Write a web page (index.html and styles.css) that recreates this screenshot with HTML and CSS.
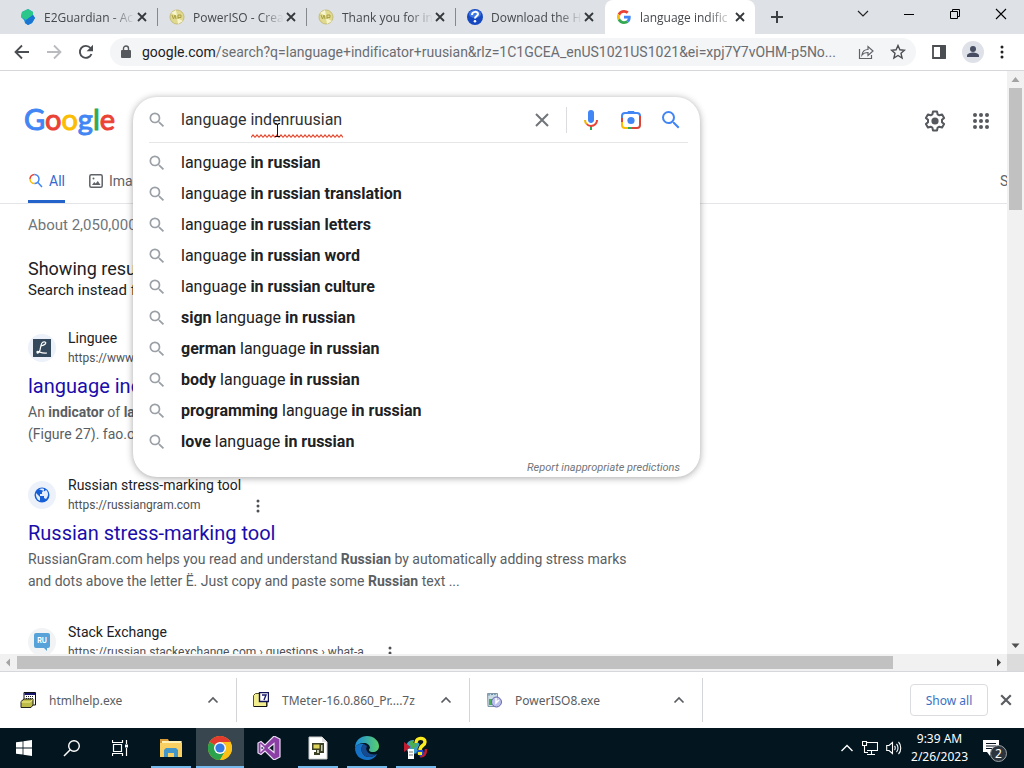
FILE: index.html
```html
<!DOCTYPE html>
<html lang="en">
<head>
<meta charset="utf-8">
<title>language indificator ruusian - Google Search</title>
<link rel="stylesheet" href="styles.css">
</head>
<body>
<svg class="defs" aria-hidden="true">
  <symbol id="x" viewBox="0 0 10 10"><path d="M1 1l8 8M9 1l-8 8" fill="none" stroke="currentColor" stroke-width="1.8"/></symbol>
  <symbol id="mag" viewBox="0 0 24 24"><path fill="currentColor" d="M15.5 14h-.79l-.28-.27A6.47 6.47 0 0 0 16 9.5 6.5 6.5 0 1 0 9.5 16c1.61 0 3.09-.59 4.23-1.57l.27.28v.79l5 4.99L20.49 19l-4.99-5zm-6 0C7.01 14 5 11.99 5 9.5S7.01 5 9.5 5 14 7.01 14 9.5 11.99 14 9.5 14z"/></symbol>
  <symbol id="dots" viewBox="0 0 4 14"><g fill="currentColor"><circle cx="2" cy="2" r="1.5"/><circle cx="2" cy="7" r="1.5"/><circle cx="2" cy="12" r="1.5"/></g></symbol>
  <symbol id="up" viewBox="0 0 12 8"><path d="M1.500 6.500L6 2l4.500 4.500" fill="none" stroke="currentColor" stroke-width="1.700"/></symbol>
  <symbol id="disc" viewBox="0 0 16 16"><circle cx="8" cy="8" r="7" fill="#e0d98e" stroke="#c6bd77"/><path d="M2 4l5-3 1 6M14 12l-5 3-1-6" fill="#f7f5ce"/><path d="M3 6l1.500 4L6 6l1 4M9 10V6h3v2.500H9" fill="none" stroke="#aaa045"/></symbol>
</svg>

<header class="tabs">
  <div class="tab"><svg class="fav" viewBox="0 0 16 16"><path d="M8 0l5 3v3l2 3-3 5-4 2-3-2-1-3-3-3 1-5z" fill="#168fd8"/><path d="M8 0l5 3v3L6 11l-5-3 1-5z" fill="#2bc78a"/><path d="M6 11l7-5 2 3-3 5-4 2-3-2z" fill="#1976d2"/></svg><span class="title">E2Guardian - Ac</span><button class="close" aria-label="Close tab"><svg><use href="#x"/></svg></button></div>
  <div class="tab"><svg class="fav"><use href="#disc"/></svg><span class="title">PowerISO - Crea</span><button class="close" aria-label="Close tab"><svg><use href="#x"/></svg></button></div>
  <div class="tab"><svg class="fav"><use href="#disc"/></svg><span class="title">Thank you for in</span><button class="close" aria-label="Close tab"><svg><use href="#x"/></svg></button></div>
  <div class="tab last"><svg class="fav" viewBox="0 0 16 16"><circle cx="8" cy="8" r="8" fill="#1649c0"/><ellipse cx="8" cy="5" rx="6" ry="4" fill="#3f78e4"/><path d="M5 6c0-4 6-4 6-1 0 2-3 2-3 4.500" fill="none" stroke="#fff" stroke-width="2"/><circle cx="8" cy="12.300" r="1.300" fill="#fff"/></svg><span class="title">Download the H</span><button class="close" aria-label="Close tab"><svg><use href="#x"/></svg></button></div>
  <div class="tab active"><svg class="fav small" viewBox="0 0 48 48"><path fill="#EA4335" d="M24 9.500c3.540 0 6.710 1.220 9.210 3.600l6.850-6.850C35.900 2.380 30.470 0 24 0 14.620 0 6.510 5.380 2.560 13.220l7.980 6.190C12.430 13.720 17.740 9.500 24 9.500z"/><path fill="#4285F4" d="M46.980 24.550c0-1.570-.15-3.090-.38-4.550H24v9.020h12.940c-.58 2.960-2.260 5.480-4.780 7.180l7.730 6c4.510-4.180 7.090-10.360 7.090-17.650z"/><path fill="#FBBC05" d="M10.530 28.590a14.500 14.500 0 0 1 0-9.180l-7.980-6.190a24 24 0 0 0 0 21.560l7.980-6.190z"/><path fill="#34A853" d="M24 48c6.480 0 11.930-2.130 15.890-5.810l-7.730-6c-2.150 1.450-4.920 2.300-8.160 2.300-6.260 0-11.570-4.220-13.470-9.910l-7.980 6.190C6.510 42.620 14.620 48 24 48z"/></svg><span class="title">language indific</span><button class="close" aria-label="Close tab"><svg><use href="#x"/></svg></button></div>
  <button class="plus" aria-label="New tab"><svg width="12" height="12" viewBox="0 0 12 12"><path d="M6 0v12M0 6h12" stroke="#3c4043" stroke-width="2"/></svg></button>
  <div class="winctl">
    <button aria-label="Search tabs"><svg width="12" height="12" viewBox="0 0 12 12"><path d="M1 3l5 5 5-5" fill="none" stroke="#222" stroke-width="1.200"/></svg></button>
    <button aria-label="Minimize"><svg width="12" height="12" viewBox="0 0 12 12"><path d="M1 6.500h10" stroke="#000"/></svg></button>
    <button aria-label="Restore"><svg width="12" height="12" viewBox="0 0 12 12"><path d="M1.500 3.500h7v7h-7zM3.500 3V1.500h7v7H9" fill="none" stroke="#000"/></svg></button>
    <button aria-label="Close"><svg width="12" height="12" viewBox="0 0 12 12"><path d="M1 1l10 10M11 1L1 11" stroke="#000" stroke-width="1.100"/></svg></button>
  </div>
</header>

<div class="toolbar">
  <button aria-label="Back"><svg width="16" height="16" viewBox="0 0 16 16"><path d="M15 8H2M8 1.500L1.500 8 8 14.500" fill="none" stroke="#4a4d51" stroke-width="1.800"/></svg></button>
  <button aria-label="Forward"><svg width="16" height="16" viewBox="0 0 16 16"><path d="M1 8h13M8 1.500L14.500 8 8 14.500" fill="none" stroke="#b9bbbe" stroke-width="1.800"/></svg></button>
  <button aria-label="Reload"><svg width="16" height="16" viewBox="0 0 16 16"><path d="M13.500 10A6 6 0 1 1 12.500 4" fill="none" stroke="#4a4d51" stroke-width="1.900"/><path d="M15 .8v6.400H8.600z" fill="#4a4d51"/></svg></button>
  <div class="omnibox">
    <svg width="10" height="14" viewBox="0 0 10 14"><path d="M1 5h8a1 1 0 0 1 1 1v6a1 1 0 0 1-1 1H1a1 1 0 0 1-1-1V6a1 1 0 0 1 1-1z" fill="#55585c"/><path d="M2.500 6V3.500a2.500 2.500 0 0 1 5 0V6" fill="none" stroke="#55585c" stroke-width="1.400"/></svg>
    <div class="url"><b>google.com</b>/search?q=language+indificator+ruusian&amp;rlz=1C1GCEA_enUS1021US1021&amp;ei=xpj7Y7vOHM-p5No...</div>
    <button aria-label="Share"><svg width="16" height="16" viewBox="0 0 16 16"><path d="M1.500 5v9.500h12V11M4 11c.5-4 2.500-5.500 6-5.500V2.500L15 7l-5 4.500v-3C7.500 8.500 5.500 9 4 11z" fill="none" stroke="#5f6368" stroke-width="1.200"/></svg></button>
    <button aria-label="Bookmark"><svg width="16" height="16" viewBox="0 0 16 16"><path d="M8 1.500l1.900 4.300 4.600.4-3.500 3.100 1.100 4.700L8 11.500 3.900 14 5 9.300 1.500 6.200l4.600-.4z" fill="none" stroke="#4a4d51" stroke-width="1.400"/></svg></button>
  </div>
  <button aria-label="Side panel"><svg width="14" height="14" viewBox="0 0 14 14"><path d="M1 1h12v12H1z" fill="none" stroke="#4a4d51" stroke-width="1.800"/><path d="M8 1h6v12H8z" fill="#4a4d51"/></svg></button>
  <button aria-label="Profile"><svg width="22" height="22" viewBox="0 0 22 22"><circle cx="11" cy="11" r="11" fill="#dfe1e8"/><circle cx="11" cy="8" r="3" fill="#474e63"/><path d="M5 16v-1.500c0-2 4-3 6-3s6 1 6 3V16z" fill="#474e63"/></svg></button>
  <button aria-label="Menu"><svg width="4" height="14"><use href="#dots"/></svg></button>
</div>

<div class="view">
  <main class="page">
    <div class="head">
      <a class="logo" href="#" aria-label="Google"><span class="b">G</span><span class="r">o</span><span class="y">o</span><span class="b">g</span><span class="g">l</span><span class="r">e</span></a>
      <div class="tools">
        <button aria-label="Settings"><svg width="24" height="24" viewBox="0 0 24 24"><path d="M10 2.500h4l.6 2.800 1.800 1 2.700-.9 2 3.500-2.100 1.900v2.400l2.100 1.900-2 3.500-2.700-.9-1.800 1-.6 2.800h-4l-.6-2.800-1.800-1-2.700.9-2-3.500L5 13.200v-2.400L2.900 8.900l2-3.500 2.700.9 1.800-1z" fill="none" stroke="#55585c" stroke-width="2" stroke-linejoin="round"/><circle cx="12" cy="12" r="3.600" fill="#55585c"/></svg></button>
        <button aria-label="Google apps"><svg width="16" height="16" viewBox="0 0 16 16" fill="#55585c"><circle cx="2" cy="2" r="2"/><circle cx="8" cy="2" r="2"/><circle cx="14" cy="2" r="2"/><circle cx="2" cy="8" r="2"/><circle cx="8" cy="8" r="2"/><circle cx="14" cy="8" r="2"/><circle cx="2" cy="14" r="2"/><circle cx="8" cy="14" r="2"/><circle cx="14" cy="14" r="2"/></svg></button>
      </div>
    </div>
    <nav class="nav">
      <a class="on" href="#"><svg width="16" height="16" viewBox="0 0 16 16" fill="none" stroke-width="1.500"><path d="M2 6a4.500 4.500 0 0 1 4.500-4.500" stroke="#ea4335"/><path d="M6.500 10.500A4.500 4.500 0 0 1 2 6" stroke="#fbbc04"/><path d="M6.500 1.500a4.500 4.500 0 1 1 0 9M9.700 9.300L14 14" stroke="#4285f4"/></svg>All</a>
      <a href="#"><svg width="14" height="14" viewBox="0 0 14 14"><rect x=".8" y=".8" width="12.400" height="12.400" rx="1.500" fill="none" stroke="#5f6368" stroke-width="1.500"/><path d="M3 11l2.200-3 1.500 1.600L8.800 7l2.700 4z" fill="#5f6368"/><circle cx="4.500" cy="4.500" r="1" fill="#5f6368"/></svg>Images</a>
      <a class="safe" href="#">SafeSearch</a>
    </nav>
    <div class="stats">About 2,050,000 results</div>
    <div class="fix"><div class="showing">Showing results for</div><div class="instead">Search instead for</div></div>

    <article class="result">
      <div class="site"><span class="ico"><svg width="18" height="18" viewBox="0 0 18 18"><path d="M0 0h18v18H0z" fill="#34495b"/><path d="M12 3c-4-1-4 4-5 8-1 3-3 4-3 2s4 2 10 1M12 3c2 1 0 3-4 4" fill="none" stroke="#fff" stroke-width="1.200"/></svg></span><div><div class="name">Linguee</div><div class="addr">https://www.linguee.com</div></div></div>
      <h3><a href="#">language indicator</a></h3>
      <p>An <b>indicator</b> of <b>language</b><br>(Figure 27). fao.org</p>
    </article>
    <article class="result">
      <div class="site"><span class="ico"><svg width="16" height="16" viewBox="0 0 16 16"><circle cx="8" cy="8" r="7.500" fill="#175fd6"/><path d="M2 6l4 4v3.800C3 13 1.500 9 2 6zM5 2.200c1.500-.8 3.500-.8 5-.2v1.500L8 5v2H6v2h4v2l2 1c3-3 2.500-7 0-9l-1.500 1.200" fill="#e3edfc"/></svg></span><div><div class="name">Russian stress-marking tool</div><div class="addr">https://russiangram.com</div></div><button class="more" aria-label="About this result"><svg width="4" height="14"><use href="#dots"/></svg></button></div>
      <h3><a href="#">Russian stress-marking tool</a></h3>
      <p>RussianGram.com helps you read and understand <b>Russian</b> by automatically adding stress marks and dots above the letter Ё. Just copy and paste some <b>Russian</b> text ...</p>
    </article>
    <article class="result">
      <div class="site"><span class="ico grey"><svg width="16" height="18" viewBox="0 0 16 18"><path d="M2 0h12a2 2 0 0 1 2 2v11a2 2 0 0 1-2 2h-1v3l-3-3H2a2 2 0 0 1-2-2V2a2 2 0 0 1 2-2z" fill="#57a3d9"/><text class="ru" x="8" y="10" text-anchor="middle">RU</text></svg></span><div><div class="name">Stack Exchange</div><div class="addr">https://russian.stackexchange.com › questions › what-a...</div></div><button class="more" aria-label="About this result"><svg width="4" height="14"><use href="#dots"/></svg></button></div>
    </article>

    <form class="search" role="search">
      <div class="field">
        <svg class="m"><use href="#mag"/></svg>
        <div class="box">
          <input type="text" value="language indenruusian" aria-label="Search">
          <svg class="squiggle" width="92" height="5"><defs><pattern id="w" width="4" height="5" patternUnits="userSpaceOnUse"><path d="M0 3.500L2 1l2 2.500" fill="none" stroke="#e2452b" stroke-width="1.200"/></pattern></defs><rect width="92" height="5" fill="url(#w)"/></svg>
          <svg class="ibeam" width="6" height="16" viewBox="0 0 6 16"><path d="M1 1.500h1.500l1 1 1-1H6M3.500 2v12M1 14.500h5" fill="none" stroke="#111"/></svg>
        </div>
        <button type="button" aria-label="Clear"><svg width="14" height="14" viewBox="0 0 14 14"><path d="M1 1l12 12M13 1L1 13" stroke="#70757a" stroke-width="2"/></svg></button>
        <span class="bar"></span>
        <button type="button" aria-label="Search by voice"><svg width="24" height="24" viewBox="0 0 24 24"><path d="M12 15c1.660 0 3-1.310 3-2.970V5a3 3 0 1 0-6 0v7.030C9 13.690 10.340 15 12 15z" fill="#4285f4"/><path d="M11 18.080h2V22h-2z" fill="#34a853"/><path d="M7.050 16.870A6.800 6.800 0 0 1 5 12h2a5 5 0 0 0 1.450 3.470z" fill="#f4b400"/><path d="M12 16.930a4.970 4.970 0 0 1-3.540-1.550l-1.410 1.490A6.900 6.900 0 0 0 12 19c3.870 0 6.990-2.920 6.990-7h-1.990c0 2.920-2.240 4.930-5 4.930z" fill="#ea4335"/></svg></button>
        <button type="button" aria-label="Search by image"><svg width="22" height="22" viewBox="0 0 22 22" fill="none" stroke-width="2"><path d="M2 10V7a3 3 0 0 1 3-3h12a3 3 0 0 1 3 3" stroke="#4285f4"/><path d="M7 4l1-2h6l1 2z" fill="#4285f4"/><path d="M20 7v9a3 3 0 0 1-3 3h-5" stroke="#db4437"/><path d="M12 19H8" stroke="#34a853"/><path d="M8 19H5a3 3 0 0 1-3-3v-3" stroke="#fbbc04"/><path d="M2 9v4" stroke="#db4437"/><circle cx="11" cy="11.500" r="3.600" fill="#4285f4"/></svg></button>
        <button type="submit" aria-label="Google Search" class="go"><svg width="24" height="24"><use href="#mag"/></svg></button>
      </div>
      <ul>
        <li><svg class="m"><use href="#mag"/></svg><span>language <b>in russian</b></span></li>
        <li><svg class="m"><use href="#mag"/></svg><span>language <b>in russian translation</b></span></li>
        <li><svg class="m"><use href="#mag"/></svg><span>language <b>in russian letters</b></span></li>
        <li><svg class="m"><use href="#mag"/></svg><span>language <b>in russian word</b></span></li>
        <li><svg class="m"><use href="#mag"/></svg><span>language <b>in russian culture</b></span></li>
        <li><svg class="m"><use href="#mag"/></svg><span><b>sign</b> language <b>in russian</b></span></li>
        <li><svg class="m"><use href="#mag"/></svg><span><b>german</b> language <b>in russian</b></span></li>
        <li><svg class="m"><use href="#mag"/></svg><span><b>body</b> language <b>in russian</b></span></li>
        <li><svg class="m"><use href="#mag"/></svg><span><b>programming</b> language <b>in russian</b></span></li>
        <li><svg class="m"><use href="#mag"/></svg><span><b>love</b> language <b>in russian</b></span></li>
      </ul>
      <a class="report" href="#">Report inappropriate predictions</a>
    </form>
  </main>
  <div class="vbar"><svg viewBox="0 0 17 17"><path d="M4.500 11L8.500 6l4 5z" fill="#a3a3a3"/></svg><i></i><svg class="end" viewBox="0 0 17 17"><path d="M4.500 6.500L8.500 11l4-4.500z" fill="#505050"/></svg></div>
  <div class="hbar"><svg viewBox="0 0 17 17"><path d="M10 4.500L6 8.500l4 4z" fill="#a3a3a3"/></svg><i></i><svg class="end" viewBox="0 0 17 17"><path d="M7 4.500l4 4-4 4z" fill="#404040"/></svg></div>
  <div class="corner"></div>
</div>

<section class="shelf">
  <div class="dl"><svg viewBox="0 0 16 16"><path d="M4 .5h11.500V13H4z" fill="#fff" stroke="#111"/><path d="M4.500 1h10.500v2H4.500z" fill="#17176e"/><path d="M6 4.500h8M6 6.500h8" stroke="#222" stroke-dasharray="1 1"/><path d="M1 9.500l3-2.500h9v6l-2 2.500H1z" fill="#bdbb49" stroke="#222"/><path d="M1.500 10h9l2-2.500" fill="none" stroke="#f4f18f"/></svg><span>htmlhelp.exe</span><button aria-label="Options"><svg><use href="#up"/></svg></button></div>
  <div class="dl"><svg viewBox="0 0 16 16"><path d="M.5 3.500l2-2h4v2h7v11H.5z" fill="#f2ee8e" stroke="#55521a"/><path d="M1 14.500h13V10" fill="none" stroke="#111"/><path d="M6.500.5h9v9h-9z" fill="#fff" stroke="#111158" stroke-width="1.400"/><path d="M9 3h4l-2 5" fill="none" stroke="#1a1a70" stroke-width="1.400"/></svg><span>TMeter-16.0.860_Pr....7z</span><button aria-label="Options"><svg><use href="#up"/></svg></button></div>
  <div class="dl"><svg viewBox="0 0 16 16"><path d="M1.500 1.500h10v13H2z" fill="#c9dbe4" stroke="#8497a8"/><path d="M2 3l9-1" stroke="#5f87a5" stroke-dasharray="2 1"/><path d="M3 7h4v6H3z" fill="#4bad55"/><circle cx="10.500" cy="10" r="5" fill="#b9bde9" stroke="#676aae"/><path d="M10 6v5l3-3" fill="none" stroke="#fff" stroke-width="1.500"/></svg><span>PowerISO8.exe</span><button aria-label="Options"><svg><use href="#up"/></svg></button></div>
  <button class="showall">Show all</button>
  <button class="dismiss" aria-label="Close"><svg width="12" height="12"><use href="#x"/></svg></button>
</section>

<footer class="taskbar">
  <button aria-label="Start"><svg width="16" height="16" viewBox="0 0 16 16"><path d="M0 2.300L6.600 1.400v6.200H0zM7.400 1.300L16 0v7.600H7.400zM0 8.400h6.600v6.200L0 13.700zM7.400 8.400H16V16l-8.600-1.300z" fill="#fff"/></svg></button>
  <button aria-label="Search"><svg width="18" height="18" viewBox="0 0 18 18"><circle cx="11" cy="7" r="5.300" fill="none" stroke="#fff" stroke-width="1.400"/><path d="M7.200 10.800L1 17" stroke="#fff" stroke-width="1.500"/></svg></button>
  <button aria-label="Task view"><svg width="16" height="16" viewBox="0 0 16 16"><path d="M.5 0v2.500h10V0M1.500 4.500h8v7h-8zM.5 16v-2.500h10V16M14.500 0v4M14.500 8v8" fill="none" stroke="#fff" stroke-width="1.200"/><path d="M13 4.500h3v3h-3z" fill="#fff"/></svg></button>
  <div class="apps">
    <button class="open" aria-label="File Explorer"><svg width="22" height="20" viewBox="0 0 22 20"><path d="M0 1h8l1 2h13v15H0z" fill="#d89b36"/><path d="M2 3h19v3H2z" fill="#fff0b5"/><path d="M0 5h22v14H0z" fill="#fbd062"/><path d="M4 19v-7l2-2h10l2 2v7h-4v-4H8v4z" fill="#4296c9"/></svg></button>
    <button class="current" aria-label="Chrome"><svg width="24" height="24" viewBox="0 0 24 24"><circle cx="12" cy="12" r="12" fill="#fbc116"/><path d="M12 12L1.600 6A12 12 0 0 1 22.400 6z" fill="#e33b2e"/><path d="M12 6h10.400L17 6z" fill="#e33b2e"/><path d="M1.600 6A12 12 0 0 0 12 24l5.200-9L12 12z" fill="#2ba24c"/><path d="M12 24l5.200-9V8L12 6h10.400A12 12 0 0 1 12 24z" fill="#fbc116"/><circle cx="12" cy="12" r="6" fill="#fff"/><circle cx="12" cy="12" r="4.600" fill="#3579e3"/></svg></button>
    <button aria-label="Visual Studio"><svg width="24" height="24" viewBox="0 0 24 24"><path d="M17 0l6 3v18l-6 3-9-9-4 3.500L1 17V7l3-1.500L8 9zM4 9v6l3-3zm13-1.500L11.500 12l5.500 4.500z" fill="#8b3fa5" fill-rule="evenodd" stroke="#eadcf0" stroke-width="1.200"/></svg></button>
    <button class="open" aria-label="Archive"><svg width="20" height="24" viewBox="0 0 20 24"><path d="M1 1h13l5 5v17H1z" fill="#fff" stroke="#ccc"/><path d="M14 1v5h5" fill="#ddd"/><path d="M4 7h12v10h-4v2H6v-3h2v-2H4z" fill="#3c4024"/><path d="M5.500 8.500h6v4h-6z" fill="#ddd35a"/><path d="M13 9h1.500v6H13zM9 14h2v3H9z" fill="#c9c9b8"/></svg></button>
    <button class="open" aria-label="Edge"><svg width="24" height="24" viewBox="0 0 24 24"><defs><linearGradient id="e1" x2="1"><stop stop-color="#1c8be0"/><stop offset="1" stop-color="#59cf6c"/></linearGradient></defs><path d="M0 12C0 4 6 0 12 0c7 0 12 5 12 10 0 4-3 6-6 6-4 0-5-2-3-4 0-3-3-5-6-5-4 0-8 2-9 5z" fill="url(#e1)"/><path d="M0 12c1-3 5-5 9-4-4 3-3 9 1 12 4 2 8 1 12-2-2 4-6 6-10 6C5 24 0 19 0 12z" fill="#1571c5"/><path d="M9 8c-4 3-3 9 1 12 4 2 8 1 12-2-6 2-13-2-10-8z" fill="#164b91"/></svg></button>
    <button class="open" aria-label="Help tool"><svg width="24" height="24" viewBox="0 0 24 24"><circle cx="9" cy="11" r="7" fill="#3a9fc7"/><path d="M5 6l6-2 2 6-5 3z" fill="#4cae50"/><path d="M1 8l4 3-4 3z" fill="#c21b30" stroke="#c21b30" stroke-width="2"/><path d="M16 20c4 1 6-2 6-7" fill="none" stroke="#c21b30" stroke-width="2.500"/><path d="M12 17l5 4 3-4-2-6-4 3z" fill="#214bc5"/><path d="M12 7c0-6 9-6 9-1 0 4-5 3-5 8" fill="none" stroke="#111" stroke-width="5"/><path d="M12 7c0-6 9-6 9-1 0 4-5 3-5 8" fill="none" stroke="#f9ed21" stroke-width="3.400"/><path d="M14 16h4v3h-4z" fill="#f9ed21"/><path d="M4 13h6v10H4z" fill="#fff"/><path d="M5 16h4M5 19h4" stroke="#777"/></svg></button>
  </div>
  <div class="tray">
    <svg width="14" height="10" viewBox="0 0 14 10"><path d="M1.500 8L7 2.500 12.500 8" fill="none" stroke="#fff" stroke-width="1.400"/></svg>
    <svg width="16" height="16" viewBox="0 0 16 16"><path d="M4 2.500h11.500v8H5M9.500 11v3M5 14.500h8M.5 1.500h4v4h-4zM2.500 6v6.500H6" fill="none" stroke="#fff" stroke-width="1.100"/></svg>
    <svg width="16" height="14" viewBox="0 0 16 14"><path d="M.7 4.500H3l3.500-3v11l-3.500-3H.7zM8.500 5c1 1 1 3 0 4M10.500 3c2 2 2 6 0 8M12.500 1c3 3 3 9 0 12" fill="none" stroke="#fff" stroke-width="1.100"/></svg>
    <div class="clock"><div>9:39 AM</div><div>2/26/2023</div></div>
    <div class="note"><svg width="16" height="16" viewBox="0 0 16 16"><path d="M0 0h16v12H7v4l-3-4H0z" fill="#fff"/><path d="M3 3.500h10M3 6h10M3 8.500h7" stroke="#07131f"/></svg><span>2</span></div>
  </div>
</footer>
</body>
</html>
```

FILE: styles.css
```css
* { box-sizing: border-box; }
body { margin: 0; height: 100vh; display: flex; flex-direction: column; overflow: hidden; background: #fff; font: 12px "Noto Sans", "Open Sans", sans-serif; color: #202124; }
button { border: 0; padding: 0; background: none; font: inherit; color: inherit; display: flex; align-items: center; justify-content: center; flex: none; }
a { text-decoration: none; color: inherit; }
svg { flex: none; display: block; }
.defs { position: absolute; width: 0; height: 0; }

.tabs { display: flex; height: 34px; background: #dee1e6; padding-left: 9px; flex: none; }
.tab { flex: 0 1 149px; display: flex; align-items: center; padding: 0 10px 0 11px; border-right: 1px solid transparent; border-image: linear-gradient(transparent 24%, #85888d 24%, #85888d 76%, transparent 76%) 1; min-width: 0; }
.tab.last { border-image: none; }
.tab.active { flex-basis: 150px; background: #fff; border: 0; border-radius: 8px 8px 0 0; }
.fav { width: 16px; height: 16px; }
.fav.small { padding: 1px; }
.title { flex: 1; margin: 0 2px 0 8px; font-family: "Open Sans", sans-serif; overflow: hidden; white-space: nowrap; color: #45484d; mask-image: linear-gradient(90deg, #000 74%, transparent 100%); }
.close svg { width: 10px; height: 10px; color: #35383b; }
.plus { width: 44px; }
.winctl { margin-left: auto; display: flex; height: 28px; }
.winctl button { width: 46px; }

.toolbar { display: flex; align-items: center; height: 37px; padding: 0 20px 0 14px; border-bottom: 1px solid #d5d7da; flex: none; gap: 16px; }
.omnibox { flex: 1; min-width: 0; height: 28px; border-radius: 14px; background: #f4f5f7; display: flex; align-items: center; padding: 0 10px 0 11px; gap: 16px; }
.omnibox > svg { margin-right: -5px; }
.url { flex: 1; font: 14px Roboto, sans-serif; color: #6a6d71; white-space: nowrap; overflow: hidden; font-variant-ligatures: none; }
.url b { font-weight: 400; color: #202124; }

.view { flex: 1; min-height: 0; display: grid; grid-template: minmax(0, 1fr) 17px / minmax(0, 1fr) 17px; border-bottom: 1px solid #d5d7da; }
.page { position: relative; overflow: hidden; font-family: Roboto, sans-serif; font-size: 14px; }
.head { display: flex; justify-content: space-between; align-items: center; height: 90px; padding: 10px 18px 0 24px; }
.logo { font: 29px/40px Lato, sans-serif; -webkit-text-stroke: 1px currentColor; padding-bottom: 4px; }
.b { color: #4285f4; } .r { color: #ea4335; } .y { color: #fbbc05; } .g { color: #34a853; }
.tools { display: flex; gap: 26px; }
.nav { display: flex; height: 43px; padding-left: 28px; border-bottom: 1px solid #e3e5e8; color: #5f6368; gap: 24px; }
.nav a { display: flex; align-items: center; gap: 6px; border-bottom: 3px solid transparent; }
.nav .on { color: #3569cf; border-color: #2463c9; gap: 5px; }
.nav .safe { margin-left: auto; width: 7px; }
.stats { padding: 12px 28px; font-size: 15px; line-height: 18px; color: #70757a; }
.fix { padding: 11px 28px 29px; }
.showing { font-size: 18px; line-height: 24px; }
.instead { font-size: 15px; line-height: 18px; }
.result { padding-left: 28px; width: 640px; margin-bottom: 30px; }
.site { display: flex; align-items: center; height: 40px; }
.ico { width: 28px; height: 28px; border-radius: 14px; background: #edf2fa; display: flex; align-items: center; justify-content: center; margin-right: 12px; }
.ico.grey { background: #f1f3f4; }
.ru { font: bold 7px Inter, sans-serif; fill: #fff; }
.name { line-height: 20px; }
.addr { font-size: 12px; line-height: 20px; color: #4d5156; white-space: nowrap; }
.more { align-self: flex-end; margin: 0 0 2px 15px; color: #4d5156; }
.result h3 { margin: 4px 0 1px; font-size: 20px; line-height: 28px; font-weight: 400; color: #1a0dab; }
.result p { margin: 0; line-height: 22px; color: #5a5e63; }

.search { position: absolute; left: 133px; top: 26px; width: 567px; background: #fff; border-radius: 24px; box-shadow: 0 1px 7px rgba(32, 33, 36, .4); padding: 0 12px 1px 16px; display: flex; flex-direction: column; }
.field { display: flex; align-items: center; height: 46px; border-bottom: 1px solid #e4e6e8; }
.m { width: 20px; height: 20px; color: #9aa0a6; margin: 0 14px 0 -2px; }
.box { flex: 1; position: relative; min-width: 0; }
.box input { display: block; width: 100%; border: 0; outline: 0; padding: 0; background: none; font: 16px/24px Roboto, sans-serif; color: #303134; }
.squiggle { position: absolute; left: 70px; top: 26px; }
.ibeam { position: absolute; left: 93px; top: 14px; }
.bar { width: 1px; height: 26px; background: #dadce0; margin: 0 12px 0 17px; }
.field button { margin-right: 17px; }
.field button:first-of-type { margin-right: 0; }
.field .go { color: #4285f4; margin: 0 5px 0 0; }
ul { list-style: none; margin: 0; padding: 4px 0 0; }
li { display: flex; align-items: center; height: 31px; font-size: 16px; }
li b { font-weight: 700; }
.report { align-self: flex-end; margin: 3px 8px 0 0; font: italic 11px/16px Roboto, sans-serif; color: #70757a; }

.vbar { background: #f1f1f1; display: flex; flex-direction: column; align-items: center; }
.vbar svg, .hbar svg { width: 17px; height: 17px; }
.vbar i { width: 13px; height: 21%; background: #c1c1c1; }
.vbar .end { margin-top: auto; }
.hbar { background: #f1f1f1; display: flex; align-items: center; }
.hbar i { height: 13px; width: 87%; background: #c1c1c1; }
.hbar .end { margin-left: auto; }
.corner { background: #dcdcdc; }

.shelf { display: flex; align-items: center; height: 56px; flex: none; color: #5a5d61; }
.dl { display: flex; align-items: center; width: 233px; height: 44px; padding: 0 17px 0 16px; border-right: 1px solid #d3d5d8; gap: 13px; }
.dl:first-child { width: 237px; padding-left: 20px; }
.dl > svg { width: 16px; height: 16px; }
.dl span { flex: 1; white-space: nowrap; }
.dl button svg { width: 12px; height: 8px; }
.showall { margin-left: auto; width: 78px; height: 32px; border: 1px solid #dadce0; border-radius: 4px; color: #3b6fc4; }
.dismiss { margin: 0 12px; }

.taskbar { display: flex; height: 40px; flex: none; background: #03151f; color: #fff; }
.taskbar > button { width: 48px; }
.apps { display: flex; gap: 1px; margin-left: 3px; }
.apps button { width: 48px; }
.open { background: linear-gradient(#76b9ed, #76b9ed) center bottom / 40px 2px no-repeat; }
.current { background: linear-gradient(#76b9ed, #76b9ed) bottom / 100% 2px no-repeat #38474f; }
.tray { margin-left: auto; display: flex; align-items: center; gap: 8px; padding-right: 19px; }
.clock { text-align: center; line-height: 18px; margin: 0 7px 0 1px; }
.note { position: relative; padding-right: 6px; }
.note span { position: absolute; left: 7px; top: 5px; width: 17px; height: 17px; border: 1px solid #9da2a6; border-radius: 9px; background: #2c353d; text-align: center; line-height: 15px; }
```
